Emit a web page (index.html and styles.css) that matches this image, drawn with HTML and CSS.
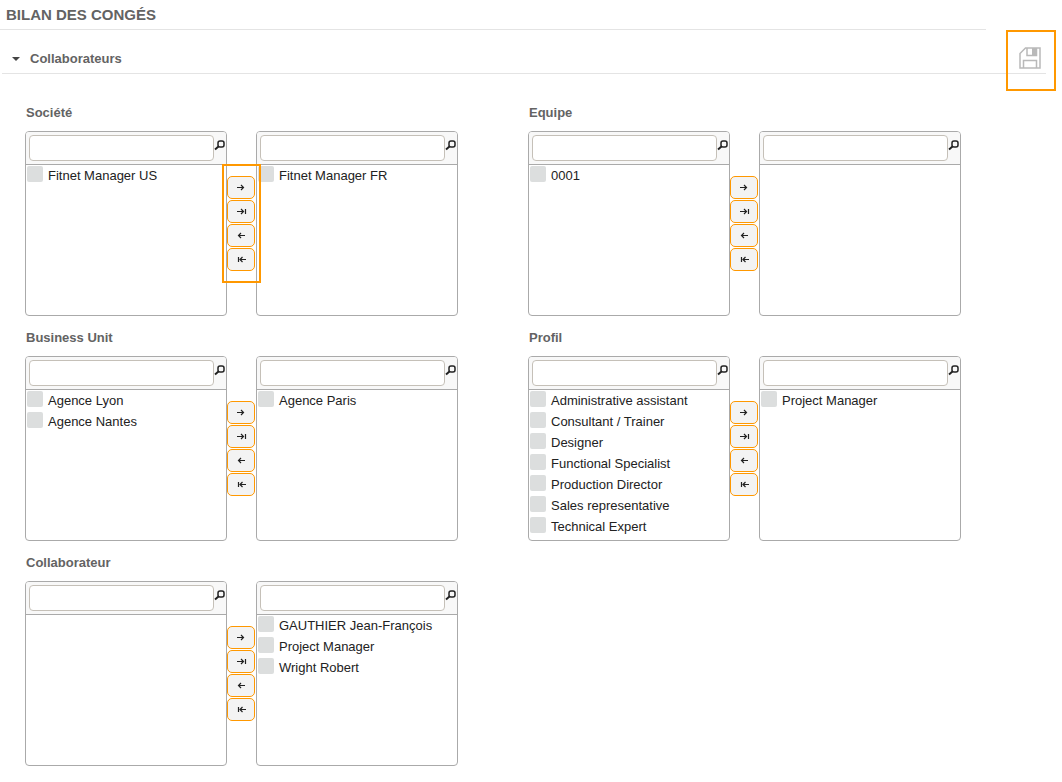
FILE: index.html
```html
<!DOCTYPE html>
<html lang="fr">
<head>
<meta charset="utf-8">
<meta name="viewport" content="width=device-width, initial-scale=1">
<title>Bilan des congés</title>
<link rel="stylesheet" href="styles.css">
</head>
<body>
<header class="page-header"><h1 class="page-title">BILAN DES CONGÉS</h1></header>
<button class="save" type="button" aria-label="Enregistrer">
  <svg width="22" height="22" viewBox="0 0 22 22" fill="none" stroke="#b9b9b9" stroke-width="1.500"><path d="M6.500 1H21V21H1V6.500Z"/><path d="M8 1V8.500H17.500V1M4.500 21V13.500H17.500V21"/><path d="M13 1h4.500v7.500h-4.500z" fill="#b9b9b9" stroke="none"/></svg>
</button>
<details class="section" open>
  <summary class="section-title"><span class="caret"></span>Collaborateurs</summary>
  <main class="groups" id="groups"></main>
</details>
<script src="app.js"></script>
</body>
</html>
```
FILE: styles.css
```css
* { box-sizing: border-box; }

body {
  margin: 0;
  position: relative;
  background: #fff;
  color: #222;
  font: 13px/21px "Liberation Sans", Arial, sans-serif;
}

.page-header {
  height: 30px;
  margin-right: 76px;
  padding: 5px 6px;
  border-bottom: 1px solid #e4e4e4;
}

.page-title {
  margin: 0;
  color: #636363;
  font-size: 15px;
  line-height: 20px;
}

.save {
  position: absolute;
  top: 30px;
  right: 6px;
  display: flex;
  justify-content: center;
  width: 50px;
  height: 61px;
  padding: 15px 2px 0 0;
  border: 2px solid #ff9800;
  background: none;
}

.section-title {
  display: flex;
  align-items: center;
  margin: 0 16px 0 2px;
  padding: 19px 10px 4px;
  border-bottom: 1px solid #e4e4e4;
  color: #636363;
  font-weight: bold;
  line-height: 20px;
  list-style: none;
}

.caret {
  margin-right: 10px;
  border: 4px solid transparent;
  border-top-color: #444;
  border-bottom: 0;
}

.groups {
  display: grid;
  grid-template-columns: repeat(2, minmax(0, 1fr));
  gap: 12px 70px;
  padding: 29px 101px 16px 25px;
}

.group-title {
  margin: 0 0 8px 1px;
  color: #636363;
  font-size: 13px;
  line-height: 20px;
}

.picker { display: flex; }

.list {
  flex: 1;
  min-width: 0;
  border: 1px solid #aaa;
  border-radius: 4px;
  overflow: hidden;
}

.search {
  display: flex;
  padding: 3px 0 3px 3px;
  border-bottom: 1px solid #aaa;
  background: #f8f8f8;
}

.search-input {
  flex: 1;
  min-width: 0;
  height: 26px;
  padding: 0 6px;
  border: 1px solid #c5c0b8;
  border-radius: 4px;
  background: #fff;
  font: inherit;
}

.search-icon {
  flex: none;
  margin-top: 5px;
}

.items {
  min-height: 150px;
  margin: 0;
  padding: 0 1px;
  list-style: none;
}

.item {
  display: flex;
  gap: 5px;
}

.check {
  appearance: none;
  width: 16px;
  height: 16px;
  margin: 1px 0 0;
  border-radius: 2px;
  background: #dcdede;
}

.check:checked { background: #ff9800; }

.moves {
  position: relative;
  display: flex;
  flex-direction: column;
  gap: 1px;
  width: 29px;
  padding: 45px 1px 0 0;
}

.move {
  display: flex;
  align-items: center;
  justify-content: center;
  height: 23px;
  padding: 0;
  border: 1px solid #ff9800;
  border-radius: 5px;
  background: #f3f3f3;
}

.highlight {
  position: absolute;
  top: 33px;
  left: -5px;
  width: 39px;
  height: 119px;
  border: 2px solid #ff9800;
  pointer-events: none;
}
```
FILE: app.js
```js
const groups = [
  { title: "Société", left: ["Fitnet Manager US"], right: ["Fitnet Manager FR"], highlight: true },
  { title: "Equipe", left: ["0001"], right: [] },
  { title: "Business Unit", left: ["Agence Lyon", "Agence Nantes"], right: ["Agence Paris"] },
  {
    title: "Profil",
    left: ["Administrative assistant", "Consultant / Trainer", "Designer", "Functional Specialist",
      "Production Director", "Sales representative", "Technical Expert"],
    right: ["Project Manager"]
  },
  { title: "Collaborateur", left: [], right: ["GAUTHIER Jean-François", "Project Manager", "Wright Robert"] }
];

const moves = [
  ["Ajouter", "M2 5.500H8.500M6 3L8.500 5.500L6 8"],
  ["Tout ajouter", "M2 5.500H8.500M6 3L8.500 5.500L6 8M10.500 3V8"],
  ["Retirer", "M10 5.500H3.500M6 3L3.500 5.500L6 8"],
  ["Tout retirer", "M11 5.500H5M7.500 3L5 5.500L7.500 8M3.500 3V8"]
];

const list = (name, items) => `
  <div class="list">
    <div class="search">
      <input class="search-input" type="text" aria-label="Rechercher : ${name}">
      <svg class="search-icon" width="12" height="12" viewBox="0 0 12 12" fill="none" stroke="#222"><rect x="4" y="1" width="6" height="6" rx="2" stroke-width="1.500"/><path d="M4.500 6.500L1 9.500" stroke-width="2"/></svg>
    </div>
    <ul class="items">${items.map(text => `
      <li><label class="item"><input class="check" type="checkbox">${text}</label></li>`).join("")}
    </ul>
  </div>`;

const buttons = moves.map(([label, path]) => `
  <button class="move" type="button" aria-label="${label}"><svg width="12" height="11" viewBox="0 0 12 11" fill="none" stroke="#222" stroke-width="1.200"><path d="${path}"/></svg></button>`).join("");

document.getElementById("groups").innerHTML = groups.map(g => `
  <section>
    <h2 class="group-title">${g.title}</h2>
    <div class="picker">
      ${list(g.title + " disponibles", g.left)}
      <div class="moves">${buttons}${g.highlight ? '<span class="highlight"></span>' : ""}</div>
      ${list(g.title + " sélectionnés", g.right)}
    </div>
  </section>`).join("");
```
